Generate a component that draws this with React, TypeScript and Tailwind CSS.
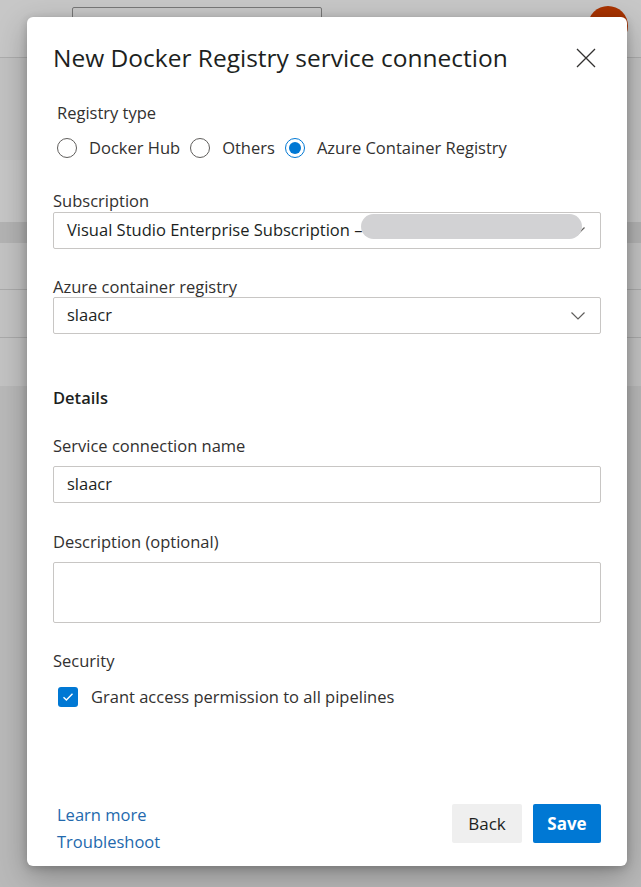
import React from "react";

const FONT = "font-['Segoe_UI','Open_Sans','Noto_Sans',sans-serif]";

function Chevron() {
  return (
    <svg width="16" height="10" viewBox="0 0 16 10" fill="none" className="shrink-0">
      <path d="M1.5 1.5 L8 8 L14.5 1.5" stroke="#605e5c" strokeWidth="1.2" />
    </svg>
  );
}

function Radio({ checked, label }: { checked?: boolean; label: string }) {
  return (
    <label className="flex items-center">
      <span
        className={
          checked
            ? "flex h-5 w-5 items-center justify-center rounded-full border-[1.5px] border-[#0078d4]"
            : "flex h-5 w-5 items-center justify-center rounded-full border border-[#605e5c]"
        }
      >
        {checked && <span className="h-[12px] w-[12px] rounded-full bg-[#0078d4]" />}
      </span>
      <span className="ml-[12px] text-[16.5px] leading-5 text-[#323130]">{label}</span>
    </label>
  );
}

function Label({ children, className = "" }: { children: React.ReactNode; className?: string }) {
  return <div className={`text-[16.5px] leading-5 text-[#323130] ${className}`}>{children}</div>;
}

export default function App() {
  return (
    <div className={`relative h-[887px] w-[641px] overflow-hidden bg-[#b9b9b9] ${FONT}`}>
      {/* page behind the overlay */}
      <div className="flex h-[58px] items-start border-b border-[#adadad] bg-[#c7c7c7]">
        <div className="ml-[72px] mt-[7px] h-[36px] w-[250px] rounded-[2px] border border-[#777]" />
        <div className="ml-auto mr-[13px] mt-[6px] h-10 w-10 rounded-full bg-[#a83300]" />
      </div>
      <div className="flex flex-col">
        <div className="h-[102px] bg-[#c2c2c2]" />
        <div className="h-[62px] bg-[#c6c6c6]" />
        <div className="h-[21px] bg-[#b3b3b3]" />
        <div className="h-[47px] border-b border-[#aaaaaa] bg-[#c3c3c3]" />
        <div className="h-[48px] border-b border-[#aaaaaa] bg-[#c3c3c3]" />
        <div className="h-[48px] bg-[#c3c3c3]" />
      </div>

      {/* dialog */}
      <div className="absolute left-[27px] top-[17px] flex h-[849px] w-[600px] flex-col rounded-[6px] bg-white px-[26px] pb-[22px] pt-[27px] shadow-[0_10px_30px_rgba(0,0,0,0.28),0_2px_8px_rgba(0,0,0,0.18)]">
        <div className="flex items-center justify-between">
          <h1 className="text-[24.5px] leading-7 font-normal text-[#201f1e]">
            New Docker Registry service connection
          </h1>
          <svg width="20" height="20" viewBox="0 0 20 20" className="mr-[5px]">
            <path d="M1 1 L19 19 M19 1 L1 19" stroke="#323130" strokeWidth="1.3" />
          </svg>
        </div>

        <Label className="mt-[31px] pl-1">Registry type</Label>
        <div className="mt-[15px] flex items-center gap-[10px] pl-1">
          <Radio label="Docker Hub" />
          <Radio label="Others" />
          <Radio checked label="Azure Container Registry" />
        </div>

        <Label className="mt-[33px]">Subscription</Label>
        <div className="relative mt-[1px] flex h-[37px] items-center justify-between rounded-[2px] border border-[#c8c6c4] pl-[13px] pr-[14px]">
          <span className="text-[16.5px] text-[#201f1e]">
            Visual Studio Enterprise Subscription – xxxxx (
          </span>
          <Chevron />
          <div className="absolute left-[307px] top-[1px] h-[25px] w-[221px] rounded-full bg-[#d2d2d4] blur-[0.6px]" />
        </div>

        <Label className="mt-[28px]">Azure container registry</Label>
        <div className="flex h-[37px] items-center justify-between rounded-[2px] border border-[#c8c6c4] pl-[13px] pr-[14px]">
          <span className="text-[16.5px] text-[#201f1e]">slaacr</span>
          <Chevron />
        </div>

        <div className="mt-[54px] text-[16.5px] leading-5 font-semibold text-[#201f1e]">Details</div>

        <Label className="mt-[28px]">Service connection name</Label>
        <div className="mt-[10px] flex h-[37px] items-center rounded-[2px] border border-[#c8c6c4] pl-[13px]">
          <span className="text-[16.5px] text-[#201f1e]">slaacr</span>
        </div>

        <Label className="mt-[29px]">Description (optional)</Label>
        <div className="mt-[10px] h-[61px] rounded-[2px] border border-[#c8c6c4]" />

        <Label className="mt-[28px]">Security</Label>
        <div className="mt-[16px] flex items-center pl-[5px]">
          <span className="flex h-5 w-5 items-center justify-center rounded-[3px] bg-[#0078d4]">
            <svg width="12" height="10" viewBox="0 0 12 10" fill="none">
              <path d="M1.5 5.2 L4.4 8 L10.5 1.8" stroke="white" strokeWidth="1.4" />
            </svg>
          </span>
          <span className="ml-[13px] text-[16.5px] leading-5 text-[#323130]">
            Grant access permission to all pipelines
          </span>
        </div>

        <div className="mt-auto flex items-end justify-between">
          <div className="mb-[-11px] flex flex-col pl-1 text-[16.5px] leading-[27px] text-[#2369ad]">
            <span>Learn more</span>
            <span>Troubleshoot</span>
          </div>
          <div className="mb-[1px] flex gap-[11px]">
            <button className="h-[39px] w-[70px] rounded-[2px] bg-[#efefef] text-[17px] font-medium text-[#201f1e]">
              Back
            </button>
            <button className="h-[39px] w-[68px] rounded-[2px] bg-[#0078d4] text-[17px] font-bold text-white">
              Save
            </button>
          </div>
        </div>
      </div>
    </div>
  );
}
